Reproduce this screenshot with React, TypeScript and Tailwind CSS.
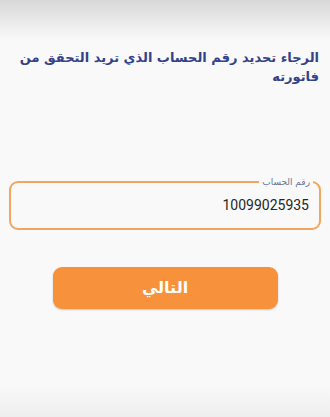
export default function App() {
  return (
    <div
      dir="rtl"
      className="relative w-[330px] h-[417px] overflow-hidden bg-[#f9f9f9] font-['DejaVu_Sans',sans-serif]"
    >
      {/* top shade and bottom shade */}
      <div className="absolute inset-x-0 top-0 h-10 bg-gradient-to-b from-[#d8d8d8] to-[#f9f9f9]" />
      <div className="absolute inset-x-0 bottom-0 h-8 bg-gradient-to-t from-[#eeeeee] to-[#f9f9f9]" />

      <div className="relative flex flex-col px-[9px] pt-[48px]">
        <h1 className="-ml-[2px] pr-[2px] text-right text-[13px] font-bold leading-[19px] text-[#34428a]">
          الرجاء تحديد رقم الحساب الذي تريد التحقق من فاتورته
        </h1>

        <div className="relative mt-[95px] h-[49px] rounded-[9px] border-2 border-[#f2a55c]">
          <span className="absolute -top-[8px] right-[6px] bg-[#f9f9f9] px-[3px] text-[9px] leading-[14px] text-[#6e7596]">
            رقم الحساب
          </span>
          <div className="flex h-full items-center pr-[10px] text-[14px] text-[#262626]">
            <span dir="ltr" className="font-['Roboto',sans-serif]">10099025935</span>
          </div>
        </div>

        <div className="flex justify-center pt-[37px]">
          <button
            type="button"
            className="flex h-[42px] w-[225px] items-center justify-center rounded-[9px] bg-[#f7913c] text-[16px] font-bold text-white shadow-[0_1px_2px_rgba(0,0,0,0.2)]"
          >
            التالي
          </button>
        </div>
      </div>
    </div>
  );
}
